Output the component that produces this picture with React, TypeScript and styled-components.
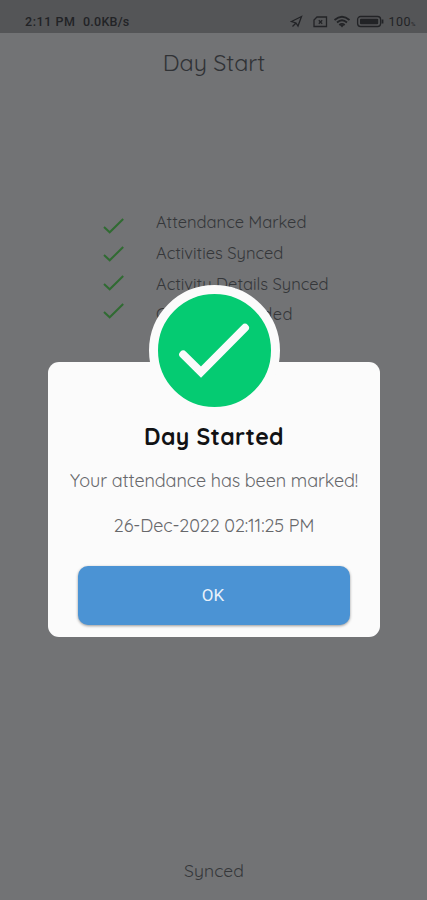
import React from "react";
import styled, { createGlobalStyle } from "styled-components";

const GlobalStyle = createGlobalStyle`
  * { box-sizing: border-box; }
  body { margin: 0; background: #727375; }
`;

const Screen = styled.div`
  position: relative;
  display: flex;
  flex-direction: column;
  width: 427px;
  height: 900px;
  overflow: hidden;
  background: #727375;
  color: #35373a;
  font-family: Quicksand, Lato, sans-serif;
`;

const StatusBar = styled.header`
  display: flex;
  align-items: center;
  justify-content: space-between;
  flex: none;
  height: 33px;
  padding: 10px 11px 0 25px;
  background: #545557;
  color: #222326;
  font: 500 12px/20px Roboto, sans-serif;
`;

const StatusGroup = styled.div<{ $gap: number }>`
  display: flex;
  align-items: center;
  gap: ${(p) => p.$gap}px;
  white-space: nowrap;
`;

const StatusText = styled.span<{ $size: number; $spacing: number }>`
  font-size: ${(p) => p.$size}px;
  letter-spacing: ${(p) => p.$spacing}px;
`;

const BatteryLevel = styled.span`
  margin-left: -1px;
  padding-top: 2px;
  font-size: 12.5px;
  font-weight: 400;
  letter-spacing: 0.5px;
  small { font-size: 6px; }
`;

const Title = styled.h1`
  margin: 14px 0 0;
  padding-left: 1px;
  text-align: center;
  font-size: 23.3px;
  line-height: 32px;
  font-weight: 400;
  color: #303235;
`;

const Checklist = styled.ul`
  display: grid;
  grid-auto-rows: 30.7px;
  margin: 128px 0 0;
  padding: 0 0 0 103px;
  list-style: none;
`;

const CheckRow = styled.li`
  display: grid;
  grid-template-columns: 22px 1fr;
  column-gap: 31px;
  align-items: center;
`;

const Tick = styled.svg<{ $shift: number }>`
  display: block;
  margin-top: ${(p) => p.$shift}px;
`;

const RowLabel = styled.span<{ $spacing: number }>`
  font-size: 16.5px;
  line-height: 24px;
  white-space: nowrap;
  letter-spacing: ${(p) => p.$spacing}px;
`;

const Footer = styled.footer`
  margin-top: auto;
  padding: 0 0 18px 1px;
  text-align: center;
  font-size: 17.5px;
  line-height: 24px;
  letter-spacing: 0.1px;
`;

const Overlay = styled.div`
  position: absolute;
  inset: 0;
  display: flex;
  flex-direction: column;
  align-items: center;
  padding: 285px 0 0 1px;
`;

const Badge = styled.div`
  z-index: 1;
  display: grid;
  place-items: center;
  width: 131px;
  height: 131px;
  margin-bottom: -54px;
  border: 9px solid #fbfbfb;
  border-radius: 50%;
  background: #05cb72;
`;

const Dialog = styled.section`
  display: flex;
  flex-direction: column;
  align-items: center;
  width: 332px;
  height: 275px;
  padding-top: 60px;
  border-radius: 11px;
  background: #fbfbfb;
`;

const DialogTitle = styled.h2`
  margin: 0;
  color: #111214;
  font-size: 23px;
  line-height: 30px;
  font-weight: 700;
  letter-spacing: 0.37px;
`;

const Message = styled.p<{ $top: number }>`
  margin: ${(p) => p.$top}px 0 0;
  color: #67686b;
  font-size: 18px;
  line-height: 26px;
  letter-spacing: -0.11px;
  white-space: nowrap;
`;

const OkButton = styled.button`
  width: 272px;
  height: 59px;
  margin-top: 27px;
  padding: 0 2px 0 0;
  border: 0;
  border-radius: 10px;
  background: #4b93d4;
  box-shadow: 0 1px 3px rgba(0, 0, 0, 0.4);
  color: #e8f1fa;
  font: 400 17px/24px Roboto, sans-serif;
`;

const items = [
  { label: "Attendance Marked", spacing: 0.01, shift: 7 },
  { label: "Activities Synced", spacing: 0, shift: 2 },
  { label: "Activity Details Synced", spacing: 0, shift: -1 },
  { label: "Contents Loaded", spacing: 0.4, shift: -6 },
];

function StatusIcons() {
  return (
    <svg width="96" height="16" viewBox="0 0 96 16" fill="none" stroke="currentColor" strokeWidth="1.3">
      <path d="M1.5 7.5 11.5 2.5 8 12 6 9ZM6 9 2.5 12.5" />
      <path d="M27 3H36.5V12.5H24V6Z" />
      <path d="m28.8 6.3 3.4 3.4m0-3.4-3.4 3.4" />
      <path d="M44.5 6Q52-.5 59.5 6M47 8.5Q52 4 57 8.5M49.3 11Q52 8.7 54.7 11" strokeWidth="1.8" />
      <path d="m50 11 2 2.5 2-2.5Z" fill="currentColor" stroke="none" />
      <rect x="67.6" y="2.5" width="23" height="10" rx="3" />
      <rect x="70" y="4.7" width="18.2" height="5.6" rx="1" fill="currentColor" stroke="none" />
      <path d="M92.5 5.5v4" strokeWidth="1.8" />
    </svg>
  );
}

export default function App() {
  return (
    <>
      <GlobalStyle />
      <Screen>
        <StatusBar>
          <StatusGroup $gap={7.5}>
            <StatusText $size={12.5} $spacing={0.55}>2:11 PM</StatusText>
            <StatusText $size={12.5} $spacing={0.25}>0.0KB/s</StatusText>
          </StatusGroup>
          <StatusGroup $gap={4}>
            <StatusIcons />
            <BatteryLevel>100<small>%</small></BatteryLevel>
          </StatusGroup>
        </StatusBar>
        <Title>Day Start</Title>
        <Checklist>
          {items.map(({ label, spacing, shift }) => (
            <CheckRow key={label}>
              <Tick $shift={shift} width="22" height="18" viewBox="0 0 22 18" fill="none" stroke="#306b32" strokeWidth="2">
                <path d="m1 10 5.7 5.3L20.2 2" />
              </Tick>
              <RowLabel $spacing={spacing}>{label}</RowLabel>
            </CheckRow>
          ))}
        </Checklist>
        <Footer>Synced</Footer>
        <Overlay>
          <Badge>
            <svg width="113" height="113" viewBox="0 0 113 113" fill="none" stroke="#fbfbfb" strokeWidth="8">
              <path d="M25.2 60.5 43 78 87 33.8" strokeLinecap="round" />
            </svg>
          </Badge>
          <Dialog role="dialog" aria-label="Day Started">
            <DialogTitle>Day Started</DialogTitle>
            <Message $top={15.5}>Your attendance has been marked!</Message>
            <Message $top={19}>26-Dec-2022 02:11:25 PM</Message>
            <OkButton>OK</OkButton>
          </Dialog>
        </Overlay>
      </Screen>
    </>
  );
}
